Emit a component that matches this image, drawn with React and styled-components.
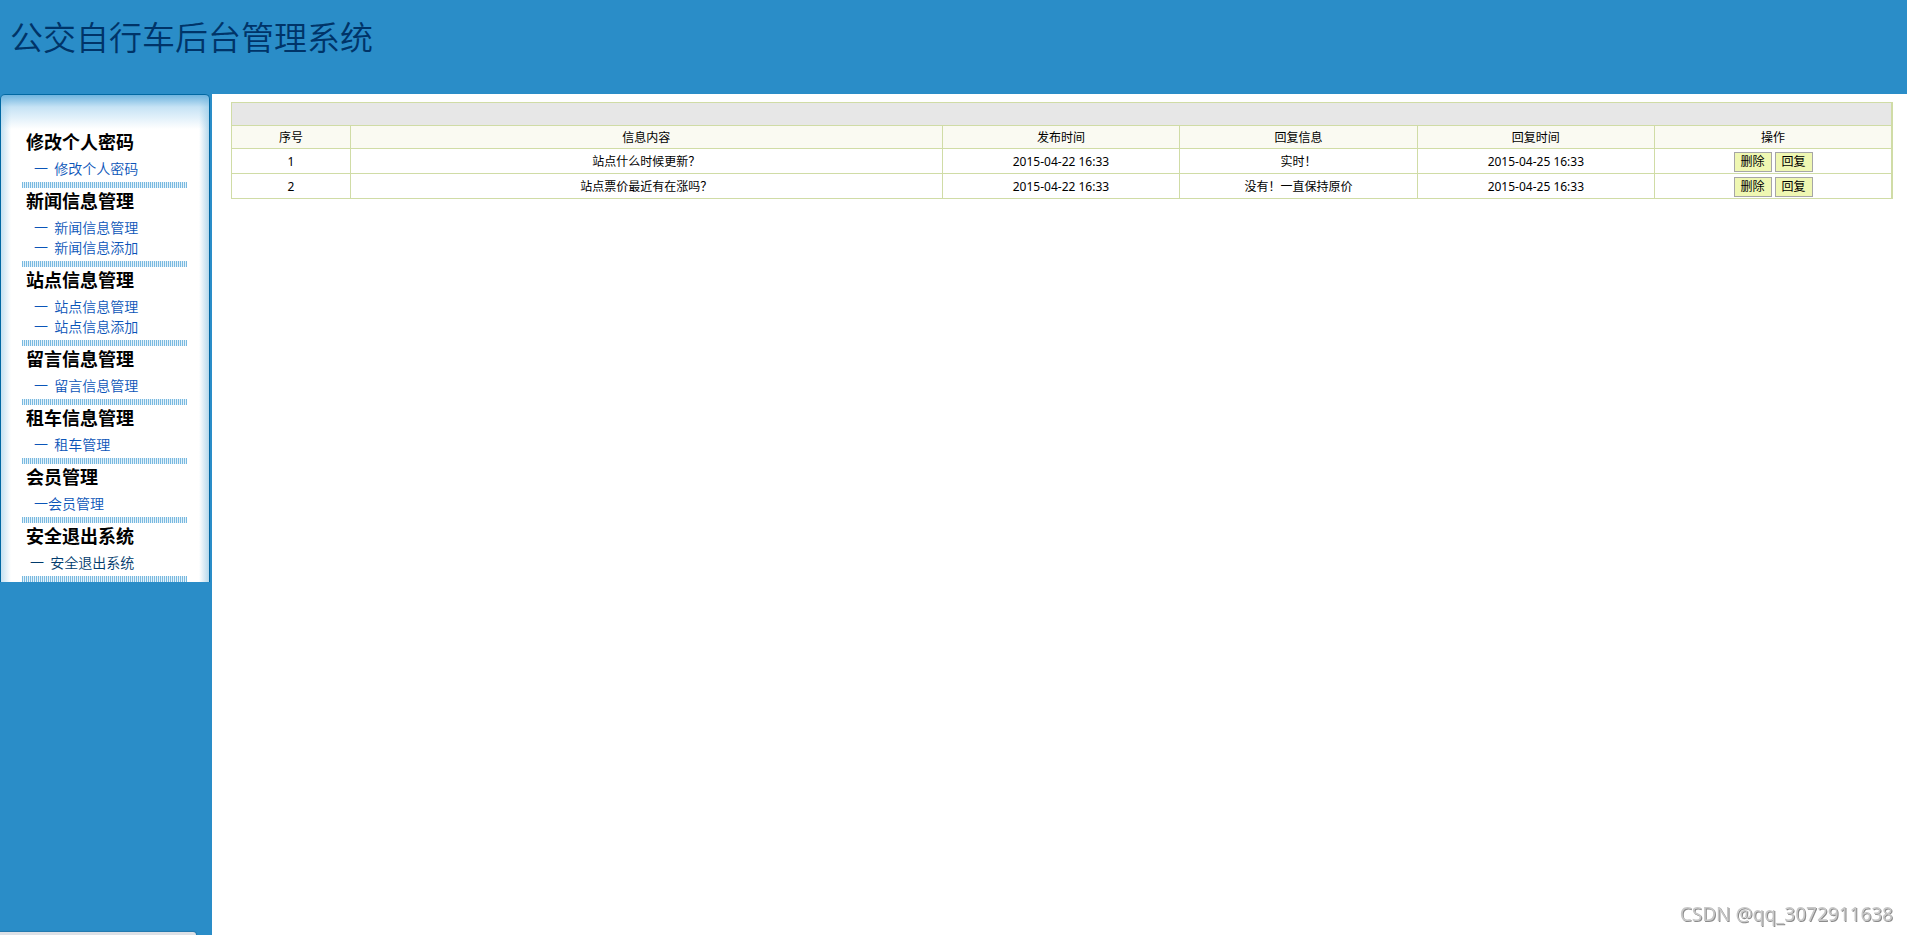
import React from 'react';
import styled, { createGlobalStyle } from 'styled-components';

const GlobalStyle = createGlobalStyle`
  * {
    box-sizing: border-box;
  }

  body {
    margin: 0;
    background-color: #fff;
    color: #000;
    font-family: 'Noto Sans', 'Noto Sans CJK SC', sans-serif;
    font-size: 12px;
  }
`;

const Page = styled.div`
  display: flex;
  flex-direction: column;
  min-height: 100vh;
`;

const Header = styled.header`
  height: 94px;
  padding: 12px 10px;
  background-color: #2a8dc8;
`;

const Title = styled.h1`
  margin: 0;
  font-family: 'Noto Sans CJK SC', sans-serif;
  font-size: 33px;
  font-weight: 350;
  line-height: 48px;
  color: #003468;
`;

const Body = styled.div`
  display: flex;
  flex: 1;
`;

const Sidebar = styled.aside`
  flex: 0 0 212px;
  padding-right: 2px;
  background-color: #2a8dc8;
`;

const Menu = styled.nav`
  padding: 34px 22px 0 21px;
  border: 1px solid #0068a3;
  border-bottom: none;
  border-radius: 5px 5px 0 0;
  background:
    linear-gradient(to bottom, #6fb4df, rgba(160, 208, 238, 0.6) 12px, rgba(255, 255, 255, 0) 34px),
    linear-gradient(to right, #c5e1f1, rgba(255, 255, 255, 0) 10px),
    linear-gradient(to left, #b4d8ec, rgba(255, 255, 255, 0) 10px),
    #fff;
`;

const MenuGroup = styled.section`
  padding-bottom: 4px;
`;

const MenuHeading = styled.h2`
  margin: 0 0 5px;
  padding-left: 4px;
  font-family: 'Noto Sans CJK SC', sans-serif;
  font-size: 18px;
  font-weight: 700;
  line-height: 24px;
`;

const MenuList = styled.ul`
  margin: 0;
  padding: 0;
  list-style: none;
`;

const MenuItem = styled.li`
  padding-left: ${({ $exit }) => ($exit ? '8px' : '12px')};
  line-height: 20px;
`;

const MenuLink = styled.a`
  display: block;
  font-family: 'Noto Sans CJK SC', sans-serif;
  font-size: 14px;
  font-weight: 350;
  color: ${({ $exit }) => ($exit ? '#003a6c' : '#0b55b8')};
  text-decoration: none;
`;

const Divider = styled.div`
  height: 6px;
  background: repeating-linear-gradient(to right, #79b9e0 0 1px, #e4f2fa 1px 2px);
`;

const Content = styled.main`
  flex: 1;
  padding: 8px 14px 8px 19px;
`;

const Table = styled.table`
  width: 100%;
  table-layout: fixed;
  border-collapse: collapse;
  border: 1px solid #d0dca6;
  border-right-width: 2px;
  text-align: center;
`;

const TitleCell = styled.td`
  height: 23px;
  padding: 0;
  background-color: #e7e7e7;
`;

const HeadCell = styled.th`
  height: 23px;
  padding: 2px 0 0;
  border: 1px solid #d0dca6;
  background-color: #fafaf2;
  font-weight: 400;
  line-height: 18px;
`;

const Cell = styled.td`
  height: 25px;
  padding: 2px 0 0;
  border: 1px solid #d0dca6;
  line-height: 18px;
`;

const Actions = styled.div`
  display: flex;
  justify-content: center;
  gap: 3px;
`;

const ActionButton = styled.button`
  width: 38px;
  height: 20px;
  padding: 0;
  border: 1px solid #a6a6a6;
  background-color: #eff7b2;
  color: #000;
  font-family: inherit;
  font-size: 12px;
  line-height: 18px;
  cursor: pointer;
`;

const StatusBar = styled.div`
  position: fixed;
  left: 0;
  bottom: 0;
  width: 196px;
  height: 3px;
  border-top-right-radius: 3px;
  background-color: #dee1e6;
  box-shadow: 0 0 1px 1px #2478ac;
`;

const Watermark = styled.div`
  position: fixed;
  right: 14px;
  bottom: 6px;
  font-size: 19px;
  line-height: 30px;
  color: #c8c8c8;
  text-shadow: 1px 1px 0 #8c8c8c;
`;

const menuGroups = [
  { title: '修改个人密码', items: ['修改个人密码'] },
  { title: '新闻信息管理', items: ['新闻信息管理', '新闻信息添加'] },
  { title: '站点信息管理', items: ['站点信息管理', '站点信息添加'] },
  { title: '留言信息管理', items: ['留言信息管理'] },
  { title: '租车信息管理', items: ['租车管理'] },
  { title: '会员管理', items: ['会员管理'], tight: true },
  { title: '安全退出系统', items: ['安全退出系统'], exit: true },
];

const columns = [
  { label: '序号', width: '119px' },
  { label: '信息内容' },
  { label: '发布时间', width: '14.3%' },
  { label: '回复信息', width: '14.3%' },
  { label: '回复时间', width: '14.3%' },
  { label: '操作', width: '14.3%' },
];

const messages = [
  {
    id: 1,
    content: '站点什么时候更新？',
    createdAt: '2015-04-22 16:33',
    reply: '实时！',
    repliedAt: '2015-04-25 16:33',
  },
  {
    id: 2,
    content: '站点票价最近有在涨吗？',
    createdAt: '2015-04-22 16:33',
    reply: '没有！一直保持原价',
    repliedAt: '2015-04-25 16:33',
  },
];

const SideMenu = () => (
  <Sidebar>
    <Menu>
      {menuGroups.map(({ title, items, tight, exit }) => (
        <React.Fragment key={title}>
          <MenuGroup>
            <MenuHeading>{title}</MenuHeading>
            <MenuList>
              {items.map((item) => (
                <MenuItem key={item} $exit={exit}>
                  <MenuLink href="#" $exit={exit}>
                    {tight ? '一' : '一\u00a0\u00a0'}
                    {item}
                  </MenuLink>
                </MenuItem>
              ))}
            </MenuList>
          </MenuGroup>
          <Divider />
        </React.Fragment>
      ))}
    </Menu>
  </Sidebar>
);

const MessageTable = () => (
  <Table>
    <colgroup>
      {columns.map(({ label, width }) => (
        <col key={label} width={width} />
      ))}
    </colgroup>
    <thead>
      <tr>
        <TitleCell colSpan={columns.length} />
      </tr>
      <tr>
        {columns.map(({ label }) => (
          <HeadCell key={label} scope="col">
            {label}
          </HeadCell>
        ))}
      </tr>
    </thead>
    <tbody>
      {messages.map((message) => (
        <tr key={message.id}>
          <Cell>{message.id}</Cell>
          <Cell>{message.content}</Cell>
          <Cell>{message.createdAt}</Cell>
          <Cell>{message.reply}</Cell>
          <Cell>{message.repliedAt}</Cell>
          <Cell>
            <Actions>
              <ActionButton type="button">删除</ActionButton>
              <ActionButton type="button">回复</ActionButton>
            </Actions>
          </Cell>
        </tr>
      ))}
    </tbody>
  </Table>
);

const App = () => {
  return (
    <>
      <GlobalStyle />
      <Page>
        <Header>
          <Title>公交自行车后台管理系统</Title>
        </Header>
        <Body>
          <SideMenu />
          <Content>
            <MessageTable />
          </Content>
        </Body>
      </Page>
      <StatusBar />
      <Watermark>CSDN @qq_3072911638</Watermark>
    </>
  );
};

export default App;
